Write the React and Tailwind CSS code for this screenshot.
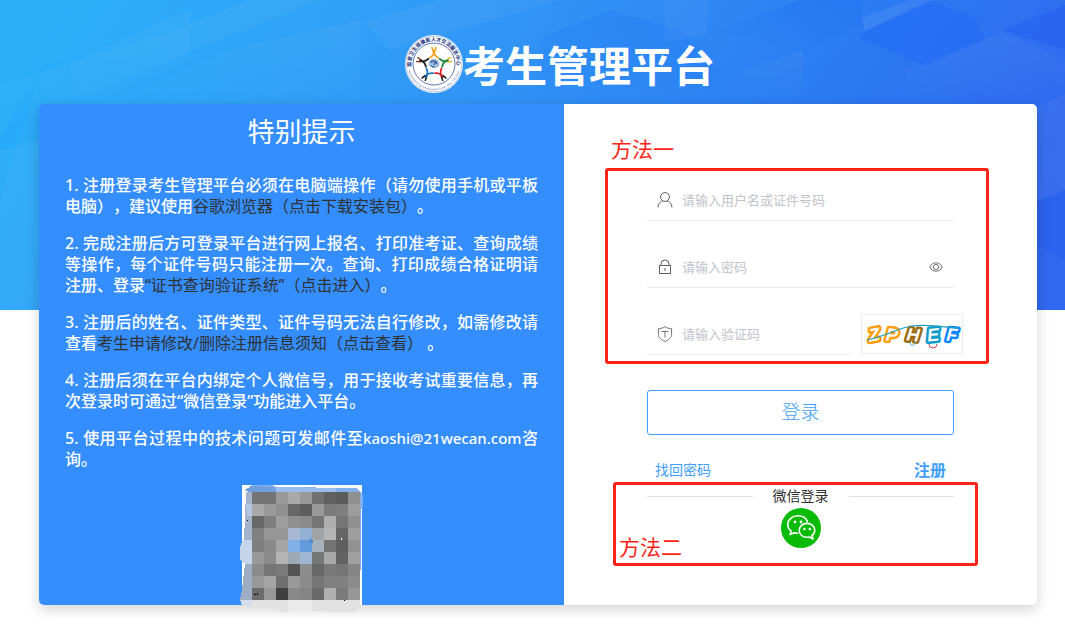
import React from "react";

const MOSAIC = [
  ["#747474", "#747474", "#999999", "#a9a9a9", "#999999", "#717171", "#606060", "#5b5b5b", "#8f8f8f"],
  ["#a9a9a9", "#999999", "#909090", "#676767", "#5d5d5d", "#999999", "#7b7b7b", "#7f7f7f", "#9d9d9d"],
  ["#676767", "#7f7f7f", "#9d9d9d", "#909090", "#8b8b8b", "#757575", "#aeaeae", "#757575", "#8f8f8f"],
  ["#808080", "#969696", "#969696", "#a8b8d2", "#93afd2", "#a2a3a5", "#b5b5b5", "#656565", "#9e9e9e"],
  ["#7e7e7e", "#898989", "#a5a5a5", "#80b0e6", "#649bdc", "#a8b2bf", "#737373", "#5f5f5f", "#929292"],
  ["#999999", "#8a8a8a", "#b4b4b4", "#9daab5", "#9fb7d3", "#757776", "#a8a8a8", "#636363", "#a0a0a0"],
  ["#8b8b8b", "#757575", "#7a7a7a", "#545454", "#8d8d8d", "#676767", "#797979", "#757575", "#868686"],
  ["#989898", "#a4a4a4", "#6f6f6f", "#999999", "#8b8b8b", "#767676", "#808080", "#808080", "#8b8b8b"],
  ["#6c6c6c", "#989898", "#404040", "#898989", "#858585", "#6a6a6a", "#b0b0b0", "#7a7a7a", "#979797"],
];

function Backdrop() {
  return (
    <svg
      aria-hidden="true"
      className="absolute inset-x-0 top-0 h-[310px] w-full"
      viewBox="0 0 1065 310"
      preserveAspectRatio="none"
    >
      <defs>
        <linearGradient id="sky" x1="0" y1="0.3" x2="1" y2="0.5">
          <stop offset="0" stopColor="#2baff9" />
          <stop offset="0.25" stopColor="#31a1f7" />
          <stop offset="0.5" stopColor="#308ff5" />
          <stop offset="0.75" stopColor="#2c7af3" />
          <stop offset="1" stopColor="#3068ef" />
        </linearGradient>
        <linearGradient id="fadeLight" x1="0" y1="0" x2="0" y2="1">
          <stop offset="0" stopColor="#fff" stopOpacity="0.04" />
          <stop offset="1" stopColor="#fff" stopOpacity="0" />
        </linearGradient>
        <linearGradient id="fadeDark" x1="0" y1="0" x2="0" y2="1">
          <stop offset="0" stopColor="#0050ee" stopOpacity="0.12" />
          <stop offset="1" stopColor="#0050ee" stopOpacity="0" />
        </linearGradient>
      </defs>
      <rect width="1065" height="310" fill="url(#sky)" />
      <polygon points="0,85 170,32 250,0 320,0 170,60 0,130" fill="url(#fadeLight)" />
      <polygon points="0,140 40,68 100,52 40,72 0,200" fill="#10a8ff" opacity="0.12" />
      <polygon points="70,62 190,10 190,60 130,85 70,104" fill="url(#fadeLight)" />
      <polygon points="140,92 230,50 360,20 360,104 140,104" fill="url(#fadeLight)" />
      <polygon points="365,22 440,0 560,0 390,50" fill="#fff" opacity="0.04" />
      <polygon points="540,38 610,10 680,30 730,80 540,104" fill="url(#fadeDark)" />
      <polygon points="665,0 710,0 705,35 665,42" fill="#fff" opacity="0.04" />
      <polygon points="720,30 800,0 860,0 865,25 800,52 735,35" fill="url(#fadeDark)" />
      <polygon points="745,70 803,50 803,104 745,104" fill="url(#fadeLight)" />
      <polygon points="862,18 910,0 935,0 865,31" fill="#fff" opacity="0.07" />
      <polygon points="865,31 930,0 975,18 985,40 925,66 860,38" fill="#1b5ff4" opacity="0.3" />
      <polygon points="905,70 1003,32 1065,60 1065,104 905,104" fill="url(#fadeLight)" />
      <polygon points="1003,30 1065,5 1065,50" fill="#1b54ee" opacity="0.3" />
      <polygon points="1028,110 1065,94 1065,190 1028,205" fill="#fff" opacity="0.04" />
      <polygon points="1028,205 1065,190 1065,260 1028,240" fill="#1b54ee" opacity="0.22" />
      <polygon points="0,150 39,140 39,310 0,310" fill="#fff" opacity="0.03" />
    </svg>
  );
}

function Figure({ angle, color, hand }) {
  return (
    <g transform={`rotate(${angle} 29 30) translate(0 -1)`} fill="none" stroke={color} strokeLinecap="round">
      <circle cx="29" cy="17" r="1.6" fill={color} stroke="none" />
      <path d="M27 13.4 L27.6 15.8 L29 18.6 L30.4 15.8 L31 13.4" strokeWidth="1.5" stroke={hand} />
      <path d="M29 17 V19 C28.4 21 27 22.8 25 23.8 M29 19 C29.6 21 31 22.8 33 23.8" strokeWidth="1.8" />
    </g>
  );
}

function Emblem() {
  return (
    <svg className="size-[58px] shrink-0" viewBox="0 0 58 58" role="img" aria-label="国家卫生健康委人才交流服务中心">
      <defs>
        <path id="arcTop" d="M6.6 32.6 A22.7 22.7 0 1 1 51.4 32.6" />
        <path id="arcBottom" d="M2.6 31 A26.5 26.5 0 0 0 55.4 31" />
      </defs>
      <circle cx="29" cy="29" r="29" fill="#fff" />
      <circle cx="29" cy="29" r="27.9" fill="none" stroke="#5b75b8" strokeWidth="0.4" />
      <circle cx="29" cy="29" r="21" fill="none" stroke="#3b56a5" strokeWidth="0.8" />
      <text fontSize="5" fontWeight="700" fill="#1d3480" fontFamily="'Noto Sans CJK SC', sans-serif">
        <textPath href="#arcTop" startOffset="1">国家卫生健康委人才交流服务中心</textPath>
      </text>
      <text fontSize="2.7" fill="#5169aa" fontFamily="'Liberation Sans', sans-serif">
        <textPath href="#arcBottom" startOffset="4">Human Resources Development Center, NHC, P.R.China</textPath>
      </text>
      <Figure angle={0} color="#f5a21b" hand="#f5a21b" />
      <Figure angle={72} color="#16863c" hand="#d8b32a" />
      <Figure angle={144} color="#e0202c" hand="#1a1a1a" />
      <Figure angle={216} color="#1574c4" hand="#1a1a1a" />
      <Figure angle={288} color="#1c1c1c" hand="#8d3a22" />
      <ellipse cx="29" cy="28.5" rx="5.5" ry="4.4" fill="#8fb2da" />
      <path d="M25.5 27 Q29 24.5 31 27.5 Q28 29 29.5 31.5 M30 26 L32.5 29.5 M26 30 L28.5 32.6" fill="none" stroke="#173d7d" strokeWidth="1" />
      <path d="M24 28 Q29 33 34 28" fill="none" stroke="#dbe8f6" strokeWidth="0.7" />
    </svg>
  );
}

function QrMosaic() {
  return (
    <svg className="mx-auto block size-[120px] overflow-visible" viewBox="0 0 120 120" role="img" aria-label="二维码" shapeRendering="crispEdges">
      <rect width="120" height="120" fill="#fff" />
      <polygon points="10,0 30,0 34,2 114,3 121,9 121,24 119,24 119,85 118,85 118,8 10,8" fill="#82aeea" />
      <polygon points="9,1 33,2 34,7 10,7 2,6" fill="#709fdf" />
      <polygon points="34,2 94,3 94,7 34,7" fill="#97bdf0" />
      <polygon points="4,7 10,7 10,55 2,55" fill="#a2b3cb" />
      <polygon points="4,19 10,19 10,31 5,31" fill="#b3c6e3" />
      <polygon points="1,55 10,55 10,79 2,79 -2,74 -2,62" fill="#c5d5ec" />
      <polygon points="3,79 10,79 10,115 -2,115 0,104" fill="#9fadc2" />
      <polygon points="-2,115 118,115 118,122 114,127 56,126 40,127 30,124 0,120" fill="#e2e2e2" />
      <polygon points="-2,115 10,115 10,121 0,120" fill="#d3dced" />
      <rect x="46" y="115" width="24" height="11" fill="#ebebeb" />
      {MOSAIC.map((row, y) =>
        row.map((fill, x) => (
          <rect key={`${x}-${y}`} x={10 + x * 12} y={7 + y * 12} width="12" height="12" fill={fill} />
        )),
      )}
      <path d="M12 109h2v1h-2z M15 108h1v2h-1z M102 115h1v1h-1z M5 35h1v1h-1z" fill="#000" />
      <rect x="99" y="53" width="1" height="2" fill="#fff" />
      <path d="M68 53h1v2h2v3h-3z" fill="#4d85cf" />
    </svg>
  );
}

function UserIcon() {
  return (
    <svg className="size-4 shrink-0" viewBox="0 0 16 16" fill="none" stroke="#606266" aria-hidden="true">
      <circle cx="8" cy="5" r="4.4" />
      <path d="M1 15.5 C1 11.8 3.6 9.2 6 8.8 M15 15.5 C15 11.8 12.4 9.2 10 8.8" />
    </svg>
  );
}

function LockIcon() {
  return (
    <svg className="size-4 shrink-0" viewBox="0 0 16 16" fill="none" stroke="#606266" aria-hidden="true">
      <rect x="2.5" y="6.5" width="11" height="8" />
      <path d="M4 6.5 V5 A4 4 0 0 1 12 5 V6.5 M8 9 V12" />
    </svg>
  );
}

function ShieldIcon() {
  return (
    <svg className="size-4 shrink-0" viewBox="0 0 16 16" fill="none" stroke="#707276" aria-hidden="true">
      <path d="M8 0.6 C9.8 1.9 12 2.6 14.6 2.7 V8.2 C14.6 11.6 11.8 14 8 15.5 C4.2 14 1.4 11.6 1.4 8.2 V2.7 C4 2.6 6.2 1.9 8 0.6 Z" strokeLinejoin="round" />
      <path d="M4.5 5.5 H11.5 M8 5.5 V11.5" />
    </svg>
  );
}

function EyeIcon() {
  return (
    <svg className="h-[14px] w-[14px]" viewBox="0 0 14 14" fill="none" stroke="#606266" strokeWidth="0.9" aria-hidden="true">
      <path d="M0.7 7 C3 1.4 11 1.4 13.3 7 C11 12.6 3 12.6 0.7 7 Z" />
      <circle cx="7" cy="7" r="2.6" />
    </svg>
  );
}

function Captcha() {
  const letters = [
    ["Z", 12, "#ff9c0a", -10],
    ["P", 30, "#ff9c0a", 4],
    ["H", 51, "#9c6a0c", 6],
    ["E", 71, "#0b9bc9", -6],
    ["F", 90, "#0a84ff", 4],
  ];
  return (
    <svg className="h-full w-full" viewBox="0 0 100 38" role="img" aria-label="验证码 ZPHEF">
      {letters.map(([c, x, color, turn]) => (
        <g key={c} transform={`rotate(${turn} ${x} 20)`}>
          <text
            x={x}
            y="26"
            fill="#fff"
            stroke={color}
            strokeWidth="5"
            strokeLinejoin="round"
            paintOrder="stroke"
            fontFamily="'Liberation Sans', sans-serif"
            fontStyle="italic"
            fontWeight="700"
            fontSize="18"
            textAnchor="middle"
          >
            {c}
          </text>
        </g>
      ))}
      <path d="M5 25 C25 21 38 12 50 11 C65 9 78 12 96 13" fill="none" stroke="#1f9fc4" strokeWidth="1.2" />
      <path d="M48 27 a2.6 2.6 0 1 0 5 0" fill="none" stroke="#3fa9cf" />
      <path d="M67 29 a4 4 0 1 0 8 0" fill="none" stroke="#d94a50" />
    </svg>
  );
}

function WechatIcon() {
  return (
    <svg className="size-10" viewBox="0 0 40 40" aria-hidden="true">
      <circle cx="20" cy="20" r="20" fill="#09bb07" />
      <path
        d="M26.4 13.6 C25.2 10.2 21.4 7.8 16.8 7.8 C11.2 7.8 6.8 11.6 6.8 16.4 C6.8 19.2 8.2 21.6 10.2 23.1 L9 26.6 L13 24.7 C14.2 25.1 15.4 25.2 16.6 25.2"
        fill="none" stroke="#fff" strokeWidth="1.6" strokeLinejoin="round" strokeLinecap="round"
      />
      <path
        d="M26 15.4 C30.4 15.4 33.8 18.5 33.8 22.2 C33.8 24.4 32.8 26.2 31 27.5 L32 31 L28.6 29 C27.8 29.2 27 29.3 26 29.3 C21.6 29.3 18.2 26.2 18.2 22.2 C18.2 18.5 21.6 15.4 26 15.4 Z"
        fill="none" stroke="#fff" strokeWidth="1.6" strokeLinejoin="round"
      />
      <g fill="#fff">
        <circle cx="14" cy="14" r="1.4" />
        <circle cx="20" cy="14" r="1.4" />
        <circle cx="23.4" cy="21" r="1.3" />
        <circle cx="28.8" cy="21" r="1.3" />
      </g>
    </svg>
  );
}

function Field({ id, label, icon, type = "text", children }) {
  return (
    <div className="flex h-[41px] w-full min-w-0 items-center gap-[9px] border-b border-[#ebebed] pl-[10px] pr-[11px]">
      <label htmlFor={id} aria-label={label}>{icon}</label>
      <input
        id={id}
        type={type}
        placeholder={label}
        className="h-full min-w-0 flex-1 bg-transparent text-[13px] text-[#606266] outline-none placeholder:text-[#c0c4cc]"
      />
      {children}
    </div>
  );
}

function Notes() {
  const link = "font-normal text-[#303133]";
  return (
    <div className="flex flex-col gap-4 text-justify text-base/[21px] font-medium [text-spacing-trim:space-all]">
      <p>
        1. 注册登录考生管理平台必须在电脑端操作（请勿使用手机或平板电脑），建议使用
        <a href="#browser" className={link}>谷歌浏览器（点击下载安装包）</a>。
      </p>
      <p>
        2. 完成注册后方可登录平台进行网上报名、打印准考证、查询成绩等操作，每个证件号码只能注册一次。查询、打印成绩合格证明请注册、登录
        <a href="#verify" className={link}>“证书查询验证系统”（点击进入）</a>。
      </p>
      <p>
        3. 注册后的姓名、证件类型、证件号码无法自行修改，如需修改请查看
        <a href="#guide" className={link}>考生申请修改/删除注册信息须知（点击查看）</a> 。
      </p>
      <p>4. 注册后须在平台内绑定个人微信号，用于接收考试重要信息，再次登录时可通过“微信登录”功能进入平台。</p>
      <p>
        5. 使用平台过程中的技术问题可发邮件至
        <span className="text-[15px]">kaoshi@21wecan.com</span>咨询。
      </p>
    </div>
  );
}

export default function App() {
  return (
    <div lang="zh-CN" className="relative min-h-screen bg-white pb-[21px] font-['Noto_Sans','Noto_Sans_CJK_SC',sans-serif]">
      <Backdrop />
      <div className="relative pl-[39px] pr-[28px]">
        <header className="flex h-[104px] items-center justify-center pl-11 pt-6">
          <Emblem />
          <h1 className="pt-1 text-[42px] leading-none font-bold text-white">考生管理平台</h1>
        </header>

        <main className="flex rounded-[5px] shadow-[0_4px_14px_rgba(0,0,0,0.18)]">
          <section className="w-[525px] rounded-l-[5px] bg-[#348eff] px-[26px] text-white">
            <h2 className="pt-[8px] pb-[23px] text-center text-[27px]/[40px] font-normal">特别提示</h2>
            <Notes />
            <div className="pt-[15px]">
              <QrMosaic />
            </div>
          </section>

          <section className="min-w-0 flex-1 rounded-r-[5px] bg-white px-[83px] pt-[76px]">
            <form onSubmit={(e) => e.preventDefault()}>
              <div className="relative flex flex-col gap-[26px]">
                <Field id="user" label="请输入用户名或证件号码" icon={<UserIcon />} />
                <Field id="password" type="password" label="请输入密码" icon={<LockIcon />}>
                  <button type="button" aria-label="显示密码"><EyeIcon /></button>
                </Field>
                <div className="-mr-[9px] flex gap-[10px]">
                  <Field id="captcha" label="请输入验证码" icon={<ShieldIcon />} />
                  <button type="button" aria-label="刷新验证码" className="h-10 w-[102px] shrink-0 border border-[#ebebed] bg-white">
                    <Captcha />
                  </button>
                </div>
                <div className="pointer-events-none absolute -top-3 -right-[35px] -bottom-[9px] -left-[42px] rounded-[3px] border-3 border-[#ff2318]" />
                <span className="absolute -top-[46px] -left-9 text-[21px]/[30px] text-[#ff2318]">方法一</span>
              </div>

              <button type="submit" className="mt-[35px] h-[45px] w-full rounded-[3px] border border-[#409eff] text-[19px] font-light text-[#409eff]">
                登录
              </button>
            </form>

            <div className="flex items-center justify-between px-2 pt-[23px] text-[#409eff]">
              <a href="#reset" className="text-sm/6">找回密码</a>
              <a href="#register" className="text-base/6 font-bold">注册</a>
            </div>

            <div className="relative">
              <div className="flex items-center gap-5 pt-1 text-sm/5 text-[#303133]">
                <span className="h-px flex-1 bg-[#dcdfe6]" />
                微信登录
                <span className="h-px flex-1 bg-[#dcdfe6]" />
              </div>
              <div className="flex h-[60px] justify-center pt-[2px]">
                <button type="button" aria-label="微信登录" className="size-10"><WechatIcon /></button>
              </div>
              <div className="pointer-events-none absolute top-0 -right-6 bottom-0 -left-[34px] rounded-[3px] border-3 border-[#ff2318]" />
              <span className="absolute bottom-1 -left-7 text-[21px]/[30px] text-[#ff2318]">方法二</span>
            </div>
          </section>
        </main>
      </div>
    </div>
  );
}
